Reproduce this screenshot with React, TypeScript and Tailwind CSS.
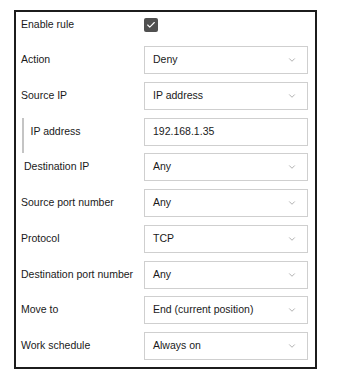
import { Check, ChevronDown } from 'lucide-react'

const rows: { label: string; value: string; kind?: 'input'; indent?: boolean; labelClass?: string }[] = [
  { label: 'Action', value: 'Deny' },
  { label: 'Source IP', value: 'IP address' },
  { label: 'IP address', value: '192.168.1.35', kind: 'input', indent: true },
  { label: 'Destination IP', value: 'Any', labelClass: 'pl-[3px]' },
  { label: 'Source port number', value: 'Any' },
  { label: 'Protocol', value: 'TCP' },
  { label: 'Destination port number', value: 'Any' },
  { label: 'Move to', value: 'End (current position)' },
  { label: 'Work schedule', value: 'Always on' },
]

function Field({ value, kind }: { value: string; kind?: 'input' }) {
  return (
    <div className="flex items-center justify-between w-[164px] h-[28px] border border-[#cfcfcf] bg-white pl-[8px] pr-[10px]">
      <span>{value}</span>
      {kind !== 'input' && <ChevronDown size={10} strokeWidth={1.6} className="text-[#8a8a8a]" />}
    </div>
  )
}

export default function App() {
  return (
    <div className="w-[337px] h-[381px] bg-white pt-[10px] pl-[14px]" style={{ fontFamily: '"Liberation Sans", Arial, sans-serif' }}>
      <div className="w-[303px] h-[359px] border-2 border-[#1c1c1c] pt-[0px] pl-[5px] pr-[7px] text-[10.5px] text-[#1a1a1a] flex flex-col gap-[7.75px]">
        <div className="flex items-center h-[24px] mt-[1px]">
          <span className="w-[123px]">Enable rule</span>
          <span className="flex items-center justify-center w-[14px] h-[14px] rounded-[2px] bg-[#505050]">
            <Check size={10} strokeWidth={2.6} className="text-white" />
          </span>
        </div>
        {rows.map((r, i) => (
          <div key={r.label} className={`flex items-center justify-between h-[28px] ${i === 0 ? 'mt-[1.25px]' : ''}`}>
            {r.indent ? (
              <div className="flex items-center self-stretch">
                <div className="w-[1.5px] h-[35px] bg-[#c4c4c4] ml-[1px] mt-[7px]" />
                <span className="pl-[7px]">{r.label}</span>
              </div>
            ) : (
              <span className={r.labelClass}>{r.label}</span>
            )}
            <Field value={r.value} kind={r.kind} />
          </div>
        ))}
      </div>
    </div>
  )
}
